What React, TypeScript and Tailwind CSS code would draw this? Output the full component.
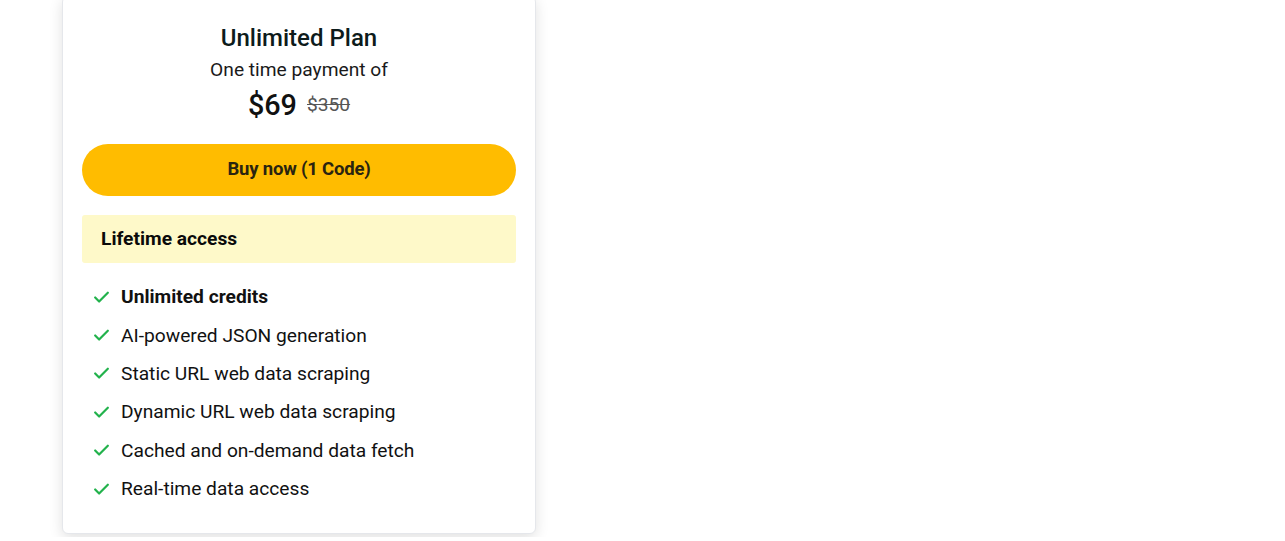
import { Check } from 'lucide-react';

const features = [
  { label: 'Unlimited credits', bold: true },
  { label: 'AI-powered JSON generation' },
  { label: 'Static URL web data scraping' },
  { label: 'Dynamic URL web data scraping' },
  { label: 'Cached and on-demand data fetch' },
  { label: 'Real-time data access' },
];

export default function App() {
  return (
    <div className="min-h-screen bg-white font-['Roboto',_'Liberation_Sans',_sans-serif] text-[#111]">
      <div className="ml-[62px] -mt-[4px] w-[474px] rounded-[6px] border border-[#e5e7eb] bg-white px-[19px] pt-[25px] pb-[31px] shadow-[0_4px_14px_rgba(0,0,0,0.12)]">
        {/* Header */}
        <div className="flex flex-col items-center">
          <h2 className="text-[24px] font-medium leading-[32px] text-[#0d1b1b]">Unlimited Plan</h2>
          <p className="mt-[3px] text-[19.2px] leading-[26px] text-[#1a1a1a]">One time payment of</p>
          <div className="mt-[3px] flex items-center gap-[10px]">
            <span className="text-[28.8px] font-medium leading-[38px] text-[#111]">$69</span>
            <span className="text-[19.2px] leading-[24px] text-[#555] line-through">$350</span>
          </div>
        </div>

        {/* Buy button */}
        <button className="mt-[20px] flex h-[52px] w-full items-center justify-center rounded-full bg-[#ffbc00] text-[18.5px] font-bold tracking-[-0.2px] text-[#2a2410]">
          Buy now (1 Code)
        </button>

        {/* Lifetime */}
        <div className="mt-[19px] flex h-[48px] items-center rounded-[3px] bg-[#fef9c9] px-[19px]">
          <span className="text-[19.2px] font-bold text-[#0a0a0a]">Lifetime access</span>
        </div>

        {/* Features */}
        <ul className="mt-[21px] flex flex-col gap-[12px] pl-[10px]">
          {features.map((f) => (
            <li key={f.label} className="flex h-[26.4px] items-center gap-[10px]">
              <Check className="h-[19px] w-[19px] text-[#22b24c]" strokeWidth={2.8} />
              <span className={`text-[19.2px] leading-[26px] text-[#111] ${f.bold ? 'font-bold' : ''}`}>{f.label}</span>
            </li>
          ))}
        </ul>
      </div>
    </div>
  );
}
